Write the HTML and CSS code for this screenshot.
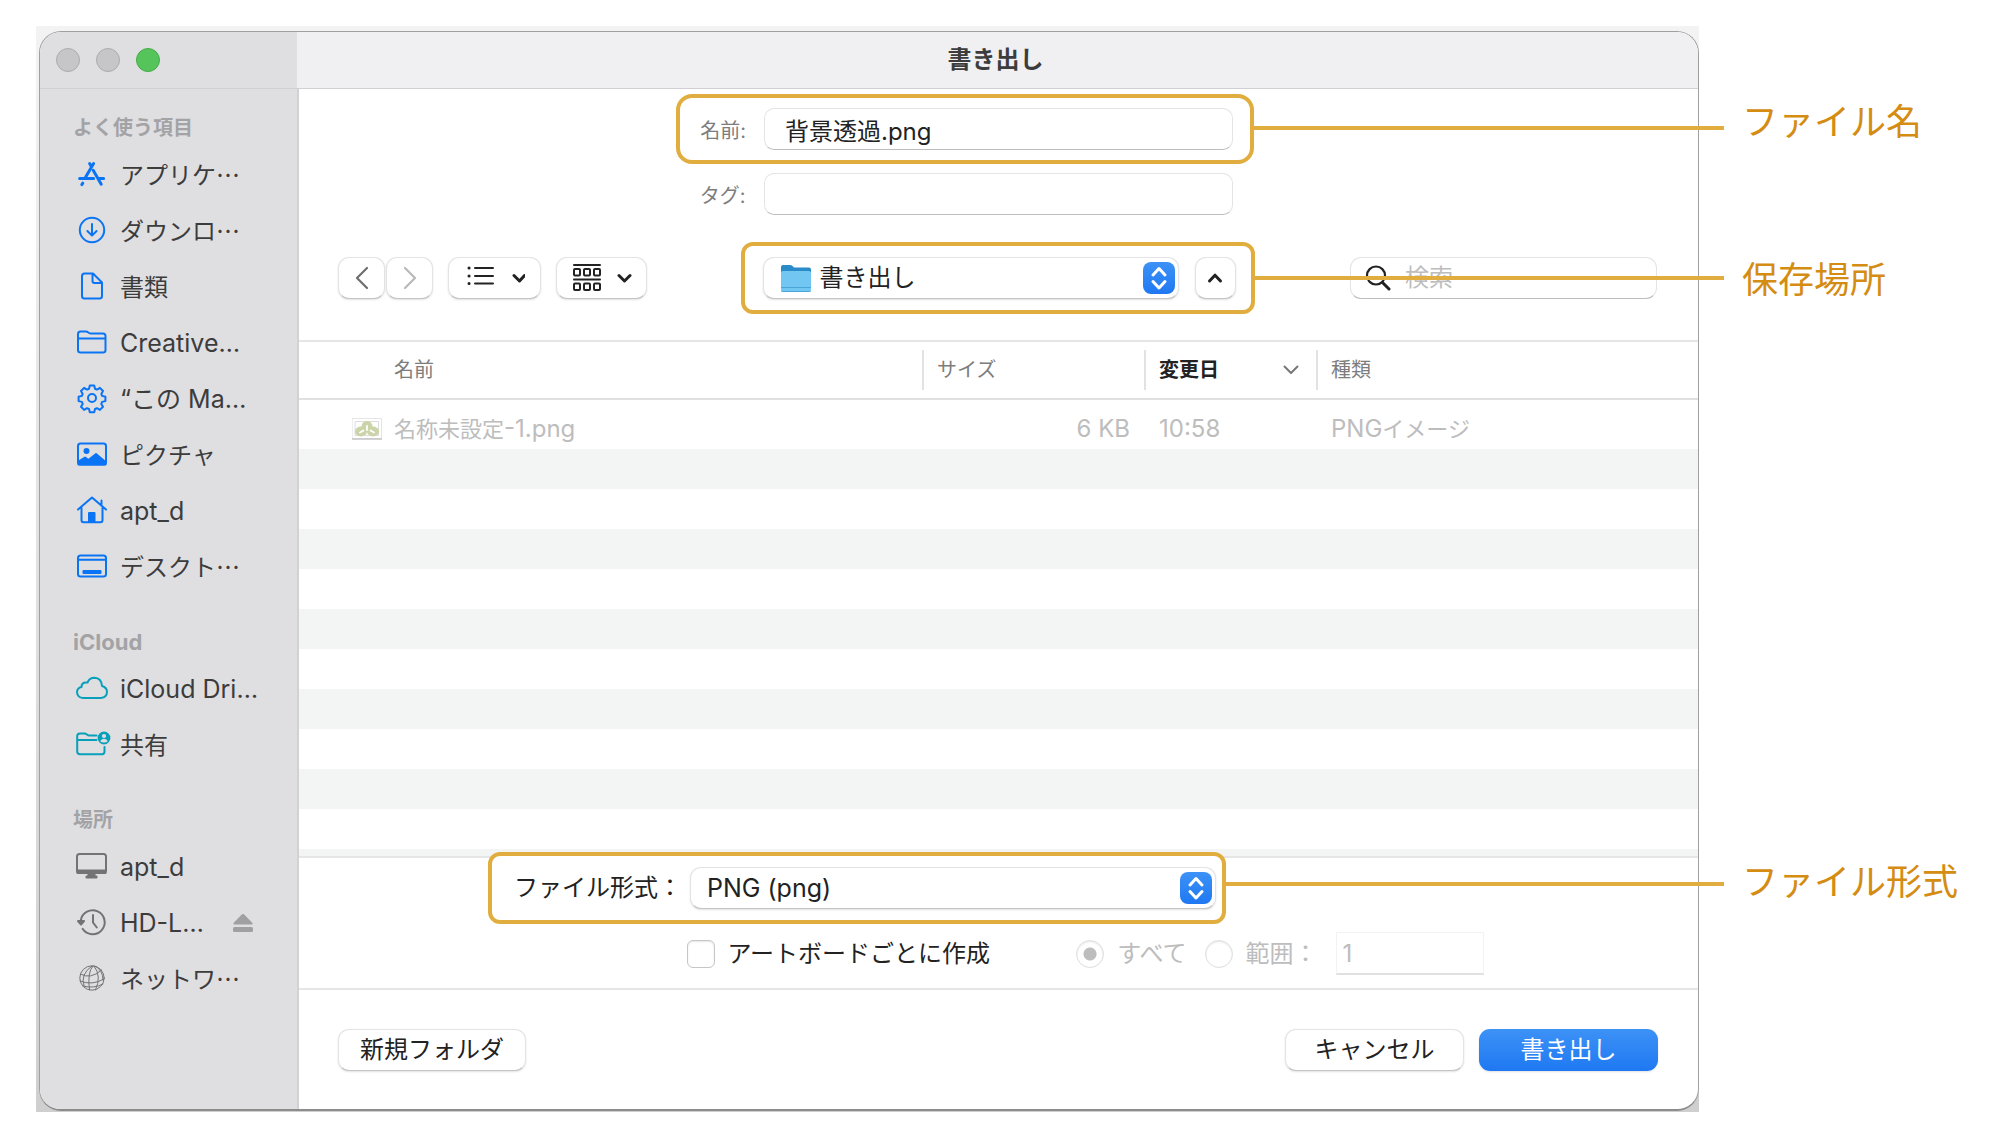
FILE: index.html
```html
<!DOCTYPE html>
<html lang="ja">
<head>
<meta charset="utf-8">
<title>書き出し</title>
<link rel="stylesheet" href="styles.css">
</head>
<body>
<div class="backdrop">
<div class="window">
  <header class="titlebar">
    <div class="lights">
      <button class="light" type="button" aria-label="閉じる"></button>
      <button class="light" type="button" aria-label="しまう"></button>
      <button class="light light-zoom" type="button" aria-label="拡大"></button>
    </div>
    <h1 class="title">書き出し</h1>
  </header>

  <nav class="sidebar">
    <section class="group">
      <h2 class="group-title">よく使う項目</h2>
      <a class="item" href="#"><svg class="icon icon-bold" viewBox="0 0 32 32"><path d="M13.600 5.600l1.600 2.700M17.600 5.600L9.400 19.600M3.600 20.600h14M23.400 20.600h4.200M17.200 12.200l8 14M5.800 26.600l1-1.400"/></svg>アプリケ…</a>
      <a class="item" href="#"><svg class="icon" viewBox="0 0 32 32"><circle cx="16" cy="16" r="12.200"/><path d="M16 10v11.400M11.400 17l4.600 4.600 4.600-4.600"/></svg>ダウンロ…</a>
      <a class="item" href="#"><svg class="icon" viewBox="0 0 32 32"><path d="M8.500 3.500h8.500l9 9v13.500q0 2.500-2.500 2.500h-15q-2.500 0-2.500-2.500v-20q0-2.500 2.500-2.500zM16.500 4v7q0 2 2 2h7.500"/></svg>書類</a>
      <a class="item" href="#"><svg class="icon" viewBox="0 0 32 32"><path d="M2 12.500h27.500M4.500 5.500h5.500q1.200 0 2 .8l1 .7q.8.600 2 .600h12q2.500 0 2.500 2.500v14q0 2.500-2.500 2.500h-22.500q-2.500 0-2.500-2.500v-16q0-2.600 2.500-2.600z"/></svg><span class="latin">Creative…</span></a>
      <a class="item" href="#"><svg class="icon" viewBox="0 0 32 32"><circle cx="16" cy="16" r="4"/><path d="M13.800 3.500h4.400l.8 3.300 2 .8 2.900-1.700 3.100 3.100-1.700 2.900.8 2 3.300.8v4.400l-3.300.8-.8 2 1.700 2.900-3.100 3.100-2.900-1.700-2 .8-.8 3.300h-4.400l-.8-3.300-2-.8-2.900 1.700-3.100-3.100 1.700-2.900-.8-2-3.300-.8v-4.400l3.300-.8.8-2-1.700-2.900 3.100-3.100 2.900 1.700 2-.8z"/></svg><span class="latin">“この Ma…</span></a>
      <a class="item" href="#"><svg class="icon" viewBox="0 0 32 32"><rect x="2" y="5.500" width="28" height="21" rx="2.500"/><circle class="solid" cx="10.500" cy="13" r="2"/><path class="solid" d="M2.500 23.500l6.500-4 3.500 2.500 7.500-6 9.500 8v2.500h-27z"/></svg>ピクチャ</a>
      <a class="item" href="#"><svg class="icon" viewBox="0 0 32 32"><path d="M2 15.500l14-12 14 12M5.500 14v12q0 2.200 2 2.200h17q2 0 2-2.200v-12M25.500 6.500v4"/><path class="solid" d="M13 19h5.500v8.500h-5.500z"/></svg><span class="latin">apt_d</span></a>
      <a class="item" href="#"><svg class="icon" viewBox="0 0 32 32"><rect x="2" y="5.500" width="28" height="21" rx="2.500"/><path d="M2 9.800h28"/><path class="solid" d="M7.500 21h17v2h-17z"/></svg>デスクト…</a>
    </section>
    <section class="group group-cloud">
      <h2 class="group-title group-latin">iCloud</h2>
      <a class="item" href="#"><svg class="icon" viewBox="0 0 32 32"><path d="M7 26q-5.500-.5-6-5.500 0-4.500 4.500-5.500 0-4.500 4.500-4.500h1.500q2-4.800 7-4.800 7 .3 7.500 8.300 5 1.500 5 6-.3 5.500-6 6z"/></svg><span class="latin">iCloud Dri…</span></a>
      <a class="item" href="#"><svg class="icon" viewBox="0 0 32 32"><path d="M1.200 12h19.300M20.500 7.400h-7.500q-1 0-1.700-.6l-.8-.6q-.8-.6-2-.6h-4.500q-2.800 0-2.800 2.600v15.400q0 2.600 2.800 2.600h22q2.500 0 2.500-2.600v-4.600"/><circle class="solid" cx="28" cy="10" r="5.400"/><circle class="badge-face" cx="28" cy="8" r="2.100"/><path class="badge-face" d="M24.200 13.200q1-2.500 3.800-2.500t3.800 2.500q-1.500 1.200-3.800 1.200t-3.800-1.200z"/></svg>共有</a>
    </section>
    <section class="group group-places">
      <h2 class="group-title">場所</h2>
      <a class="item" href="#"><svg class="icon" viewBox="0 0 32 32"><rect x="1" y="4" width="29" height="19" rx="2.500"/><path class="solid" d="M1.500 20.500h28v2.500h-28zM12.500 24h6v2.500h2v1h-10v-1h2z"/></svg><span class="latin">apt_d</span></a>
      <div class="item-row">
        <a class="item" href="#"><svg class="icon" viewBox="0 0 32 32"><path d="M4.800 14.500a12 12 0 1 1 1.800 8.300M17 9v7.500l3.800 5"/><path class="solid" d="M2 15h6l-3 3.500z"/></svg><span class="latin">HD-L…</span></a>
        <button class="eject" type="button" aria-label="取り出す"><svg width="20" height="20" viewBox="0 0 20 20"><path d="M10 1q1 0 1.500.7l8 8.300q.5 1.500-1 1.500h-17q-1.500 0-1-1.500l8-8.300q.5-.7 1.500-.7z"/><rect y="14" width="20" height="5" rx="1.500"/></svg></button>
      </div>
      <a class="item" href="#"><svg class="icon icon-fine" viewBox="0 0 32 32"><circle cx="16" cy="16" r="12.200"/><path d="M17 4q-6 6-3.500 24M18 4q8 10 1.500 24M16 4q-12 8-8 20M4.500 12q10 6 21-4M4 19q12 5 24-2M7 24q11 3 20-2M19 4q8 4 8 14"/></svg>ネットワ…</a>
    </section>
  </nav>

  <main class="pane">
    <div class="naming">
      <div class="callout-row name-row">
        <div class="highlight name-box">
          <label class="field-label" for="fname">名前:</label>
          <input class="field" id="fname" type="text" value="背景透過.png">
        </div>
        <div class="callout callout-name"><span class="callout-text">ファイル名</span></div>
      </div>
      <div class="tag-row">
        <label class="field-label" for="ftag">タグ:</label>
        <input class="field" id="ftag" type="text">
      </div>
    </div>

    <div class="callout-row toolbar">
      <div class="tools">
        <div class="history">
          <button class="btn back" type="button" aria-label="戻る"><svg width="14" height="24" viewBox="0 0 14 24" stroke="#6e6e6e" stroke-width="2.200"><path d="M12 2L2 12l10 10"/></svg></button>
          <button class="btn forward" type="button" aria-label="進む" disabled><svg width="14" height="24" viewBox="0 0 14 24" stroke="#b9b9b9" stroke-width="2.200"><path d="M2 2l10 10-10 10"/></svg></button>
        </div>
        <button class="btn view" type="button" aria-label="リスト表示"><svg width="60" height="28" viewBox="0 0 60 28" stroke="#222" stroke-width="2"><path d="M10 4h18M10 12h18M10 19.500h18"/><path d="M4 4h.1M4 12h.1M4 19.500h.1" stroke-width="3"/><path d="M49 11.500l5.500 5.500 5-5.500" stroke-width="3"/></svg></button>
        <button class="btn group-by" type="button" aria-label="グループ"><svg width="60" height="28" viewBox="0 0 60 28" stroke="#222" stroke-width="2"><path d="M2 1h26M2 15.500h26"/><rect x="2" y="5" width="6" height="6.500" rx="1"/><rect x="12" y="5" width="6" height="6.500" rx="1"/><rect x="22" y="5" width="6" height="6.500" rx="1"/><rect x="2" y="19.500" width="6" height="6.500" rx="1"/><rect x="12" y="19.500" width="6" height="6.500" rx="1"/><rect x="22" y="19.500" width="6" height="6.500" rx="1"/><path d="M47 11.500l5.500 5.500 5.500-5.500" stroke-width="3"/></svg></button>
      </div>
      <div class="highlight place-box">
        <div class="popup place">
          <svg class="folder" width="30" height="28" viewBox="0 0 30 28"><path d="M0 2q0-2 2-2h7q1.500 0 2.500 1l1.500 1.500h15q2 0 2 2v10h-30z" fill="#2a8bc9"/><path d="M0 8q0-2 2-2h26q2 0 2 2v17q0 2-2 2h-26q-2 0-2-2z" fill="#72c6f2"/><path d="M0 22.500h30M1 26.500h28" stroke="#4aa5d8" stroke-width="1"/></svg>
          <select class="select" aria-label="保存場所"><option>書き出し</option></select>
          <svg class="stepper" width="32" height="32" viewBox="0 0 32 32"><path d="M10 13l6-6.500 6 6.500M10 19.500l6 6.500 6-6.500"/></svg>
        </div>
        <button class="btn collapse" type="button" aria-label="閉じる"><svg width="16" height="12" viewBox="0 0 16 12" stroke="#222" stroke-width="3"><path d="M2.500 9L8 3.200 13.500 9"/></svg></button>
      </div>
      <div class="search">
        <svg width="26" height="26" viewBox="0 0 26 26" stroke="#222" stroke-width="2.200"><circle cx="11" cy="10.500" r="9"/><path d="M17.500 17.500l6.500 6.500" stroke-width="3"/></svg>
        <input class="search-input" type="text" placeholder="検索" aria-label="検索">
      </div>
      <div class="callout callout-place"><span class="callout-text">保存場所</span></div>
    </div>

    <div class="list">
      <table class="files">
        <colgroup><col><col class="col-size"><col class="col-date"><col class="col-kind"></colgroup>
        <thead><tr>
          <th class="th-name">名前</th>
          <th><div class="head">サイズ</div></th>
          <th><div class="head sorted">変更日<svg width="16" height="10" viewBox="0 0 16 10" stroke="#777" stroke-width="2"><path d="M1.500 1.500L8 8l6.500-6.500"/></svg></div></th>
          <th><div class="head">種類</div></th>
        </tr></thead>
        <tbody><tr>
          <td><div class="file"><svg class="thumb" width="30" height="22" viewBox="0 0 30 22"><rect x=".5" y=".5" width="29" height="20" fill="#fff" stroke="#e4e4e4"/><path d="M0 21h30" stroke="#c4c4c4" stroke-width="1.500"/><rect x="3.500" y="3.500" width="23" height="14" fill="#fff" stroke="#ddd"/><circle cx="15" cy="8.500" r="5.500" fill="#cbd4a8"/><ellipse cx="9" cy="13.500" rx="6" ry="5" fill="#cbd4a8"/><ellipse cx="21" cy="13.500" rx="6" ry="5" fill="#cbd4a8"/><path d="M15 8v4M8 14.500l3.500-2M22 14.500l-3.500-2" stroke="#fff" stroke-width="1.800"/></svg><span><span class="kana">名称未設定</span>-1.png</span></div></td>
          <td class="td-size">6 KB</td>
          <td class="td-text">10:58</td>
          <td class="td-text">PNG<span class="kana">イメージ</span></td>
        </tr></tbody>
      </table>
      <div class="stripes"></div>
    </div>

    <div class="options">
      <div class="callout-row format-row">
        <div class="highlight format-box">
          <label class="format-label" for="fmt">ファイル形式：</label>
          <div class="popup format">
            <select class="select" id="fmt"><option>PNG (png)</option></select>
            <svg class="stepper" width="32" height="32" viewBox="0 0 32 32"><path d="M10 13l6-6.500 6 6.500M10 19.500l6 6.500 6-6.500"/></svg>
          </div>
        </div>
        <div class="callout callout-format"><span class="callout-text">ファイル形式</span></div>
      </div>
      <div class="artboards">
        <label class="choice"><input class="check" type="checkbox">アートボードごとに作成</label>
        <div class="ranges">
          <label class="choice choice-off"><input class="radio" type="radio" name="range" checked disabled>すべて</label>
          <label class="choice choice-off"><input class="radio" type="radio" name="range" disabled>範囲：</label>
          <input class="range-input" type="text" value="1" aria-label="範囲" disabled>
        </div>
      </div>
    </div>

    <footer class="footer">
      <button class="btn folder-btn" type="button">新規フォルダ</button>
      <div class="actions">
        <button class="btn action" type="button">キャンセル</button>
        <button class="btn action primary" type="button">書き出し</button>
      </div>
    </footer>
  </main>
</div>
</div>
</body>
</html>
```
FILE: styles.css
```css
* { box-sizing: border-box; }

body {
  margin: 0;
  min-height: 100vh;
  padding: 26px 299px 26px 36px;
  display: flex;
  background: #fff;
  color: #222;
  font-family: Inter, "Noto Sans CJK JP", sans-serif;
  font-size: 24px;
  line-height: 32px;
}

button, input, select { font: inherit; color: inherit; margin: 0; }
svg { display: block; flex: none; fill: none; stroke-linecap: round; stroke-linejoin: round; }

.backdrop {
  flex: 1;
  display: flex;
  padding: 5px 0 1px 3px;
  background: linear-gradient(#f3f3f3, #cfcfcf);
}

.window {
  flex: 1;
  display: grid;
  grid-template: 57px 1fr / 259px 1fr;
  background: #fff;
  border: 1px solid #a0a0a0;
  border-bottom: 2px solid #8c8c8c;
  border-radius: 22px;
}

/* title bar */
.titlebar {
  grid-column: 1 / -1;
  display: grid;
  grid-template-columns: 257px 1fr;
  border-bottom: 1px solid #d0d0d2;
  border-radius: 21px 21px 0 0;
  background: linear-gradient(90deg, #dfdfe1 257px, #f0f0f3 257px);
}
.lights { display: flex; align-items: center; gap: 16px; padding-left: 16px; }
.light { width: 24px; height: 24px; padding: 0; border: 1px solid #acacae; border-radius: 50%; background: #c6c6c8; }
.light-zoom { background: #54c45b; border-color: #46ac4b; }
.title { margin: 0; padding-right: 4px; align-self: center; text-align: center; font-size: 24px; line-height: 32px; font-weight: 600; color: #3c3c3d; }

/* sidebar */
.sidebar {
  padding: 20px 16px 20px 33px;
  border-right: 2px solid #d2d2d4;
  border-radius: 0 0 0 20px;
  background: #dfdfe1;
  display: flex;
  flex-direction: column;
  gap: 28px;
}
.group { --tint: #0a74f5; }
.group-cloud { --tint: #089fba; }
.group-places { --tint: #737375; }
.group-title { margin: 0; font-size: 20px; line-height: 38px; font-weight: 700; color: #a3a3a6; }
.group-latin { font-size: 22px; }
.item {
  display: flex;
  align-items: center;
  gap: 12px;
  height: 56px;
  padding: 0 0 2px 3px;
  color: #3c3c3d;
  text-decoration: none;
  white-space: nowrap;
  font-family: "Noto Sans CJK JP", sans-serif;
}
.latin { padding-top: 2px; font-family: Inter, "Noto Sans CJK JP", sans-serif; font-size: 25px; }
.icon { width: 32px; height: 32px; overflow: visible; stroke: var(--tint); stroke-width: 2; }
.icon-bold { stroke-width: 3; }
.icon-fine { stroke-width: 1; }
.solid { fill: var(--tint); }
.badge-face { fill: #dfdfe1; stroke: none; }
.item-row { display: flex; align-items: center; justify-content: space-between; }
.eject { padding: 0; border: 0; background: none; margin-right: 28px; }
.eject svg { fill: #a0a0a3; }

/* right-hand pane */
.pane { display: flex; flex-direction: column; min-width: 0; }
.callout-row { position: relative; display: flex; }
.highlight { display: flex; align-items: center; border: 4px solid #e0ad3e; border-radius: 16px; }
.callout { position: absolute; right: -26px; height: 4px; background: #e0ad3e; }
.callout-text {
  position: absolute;
  left: 100%;
  top: -24px;
  margin-left: 18px;
  font-size: 36px;
  line-height: 48px;
  white-space: nowrap;
  color: #d48c13;
}
.callout-name .callout-text { top: -28px; }
.callout-place .callout-text { top: -20px; }

.naming { padding-top: 5px; }
.name-row { justify-content: center; padding-right: 67px; }
.name-box { width: 578px; height: 70px; padding: 0 17px 0 18px; gap: 18px; }
.callout-name { left: calc(50% + 254px); top: 32px; }
.tag-row { display: flex; align-items: center; gap: 18px; width: 578px; margin: 9px 0 0 calc(50% - 323px); padding: 0 21px 0 22px; }
.field-label { width: 48px; padding-top: 4px; text-align: right; font-size: 20px; color: #7d7d7d; white-space: nowrap; }
.field {
  flex: 1;
  min-width: 0;
  height: 42px;
  padding: 0 20px;
  border: 1px solid #e4e4e4;
  border-bottom-color: #bdbdbd;
  border-radius: 10px;
  background: #fff;
}

/* toolbar */
.toolbar {
  display: grid;
  grid-template-columns: 1fr auto 1fr;
  align-items: center;
  margin-top: 27px;
  padding: 0 41px 26px 39px;
  border-bottom: 2px solid #e6e6e6;
}
.tools { display: flex; gap: 15px; }
.history { display: flex; gap: 1px; }
.btn {
  display: flex;
  align-items: center;
  justify-content: center;
  height: 42px;
  padding: 0;
  border: 1px solid #e4e4e4;
  border-bottom-color: #c4c4c4;
  border-radius: 11px;
  background: #fff;
  box-shadow: 0 1px 2px rgba(0, 0, 0, .12);
  white-space: nowrap;
}
.back, .forward { width: 47px; }
.view { width: 93px; }
.group-by { width: 91px; }
.place-box { width: 514px; height: 72px; padding: 0 15px 0 18px; gap: 16px; border-radius: 12px; }
.collapse { width: 41px; }
.popup { position: relative; flex: 1; }
.select {
  appearance: none;
  display: block;
  width: 100%;
  height: 42px;
  padding: 0 44px 0 16px;
  border: 1px solid #e4e4e4;
  border-bottom-color: #c4c4c4;
  border-radius: 11px;
  background: #fff;
  box-shadow: 0 1px 2px rgba(0, 0, 0, .12);
}
.place .select { padding-left: 56px; }
.format .select { font-size: 25px; }
.folder { position: absolute; left: 18px; top: 8px; }
.stepper {
  position: absolute;
  right: 4px;
  top: 5px;
  border-radius: 8px;
  background: linear-gradient(#3d92f6, #1f78f2);
  stroke: #fff;
  stroke-width: 3;
  pointer-events: none;
}
.search {
  justify-self: end;
  display: flex;
  align-items: center;
  gap: 14px;
  width: 307px;
  height: 42px;
  padding: 0 14px;
  border: 1px solid #e4e4e4;
  border-bottom-color: #bdbdbd;
  border-radius: 11px;
}
.search-input { flex: 1; min-width: 0; padding: 0; border: 0; background: none; }
.search-input::placeholder { color: #bdbdbd; opacity: 1; }
.callout-place { left: calc(50% + 255px); top: 34px; }

/* file list */
.list { flex: 1; display: flex; flex-direction: column; }
.files { width: 100%; table-layout: fixed; border-collapse: collapse; }
.col-size { width: 222px; }
.col-date { width: 172px; }
.col-kind { width: 382px; }
th { height: 57px; padding: 0; border-bottom: 2px solid #e0e0e0; text-align: left; font-size: 20px; font-weight: 400; color: #7d7d7d; }
.th-name { padding-left: 95px; }
.head { display: flex; align-items: center; justify-content: space-between; height: 40px; padding: 0 17px 0 13px; border-left: 2px solid #e2e2e2; }
.sorted { font-weight: 700; color: #222; }
td { height: 50px; padding: 8px 0 0; color: #bdbdbd; }
.kana { font-size: 22px; }
.file { display: flex; align-items: center; gap: 12px; padding-left: 53px; }
.td-size { padding-right: 14px; text-align: right; }
.td-text { padding-left: 15px; }
.stripes { flex: 1; min-height: 80px; background: repeating-linear-gradient(#f3f5f4 0 40px, #fff 40px 80px); }

/* format options */
.options { border-top: 2px solid #e6e6e6; border-bottom: 2px solid #e6e6e6; padding-bottom: 13px; }
.format-row { justify-content: center; margin-top: -6px; padding-right: 283px; }
.format-box { width: 738px; height: 72px; padding: 0 6px 0 22px; border-radius: 12px; background: #fff; }
.format-label { width: 176px; white-space: nowrap; }
.callout-format { left: calc(50% + 227px); top: 30px; }
.artboards { display: flex; align-items: center; justify-content: space-between; width: 797px; margin: 8px 0 0 calc(50% - 312px); }
.choice { display: flex; align-items: center; gap: 13px; white-space: nowrap; }
.choice-off { color: #bdbdbd; }
.ranges { display: flex; align-items: center; gap: 18px; }
.check, .radio { appearance: none; flex: none; width: 28px; height: 28px; border: 1px solid #c6c6c6; border-radius: 6px; background: #fff; box-shadow: inset 0 1px 2px rgba(0, 0, 0, .1); }
.radio { border-color: #dedede; border-radius: 50%; }
.radio:checked { background: radial-gradient(circle, #bdbdbd 6px, #fff 7px); }
.range-input { width: 148px; height: 43px; padding: 0 6px; border: 1px solid #f2f2f2; border-bottom: 2px solid #e0e0e0; background: #fff; color: #bdbdbd; }

/* footer */
.footer { display: flex; justify-content: space-between; padding: 39px 40px 38px 39px; }
.actions { display: flex; gap: 15px; }
.folder-btn { width: 188px; }
.action { width: 179px; }
.primary { border: 0; background: linear-gradient(#3d92f6, #1f78f2); color: #fff; }
```
